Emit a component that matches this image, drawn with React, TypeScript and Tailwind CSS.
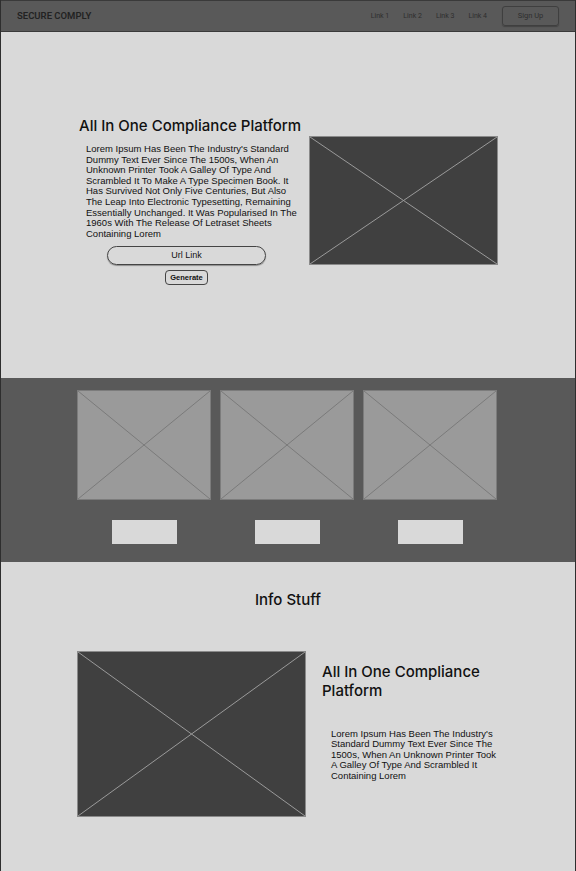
import React from 'react';

const body = { fontFamily: '"Liberation Sans", Arial, sans-serif' };
const head = { fontFamily: 'Inter, "Liberation Sans", sans-serif' };
const nav = { fontFamily: 'Roboto, "Liberation Sans", sans-serif' };

function Placeholder({ className, line }: { className: string; line: string }) {
  return (
    <div className={`relative ${className}`}>
      <svg
        className="absolute inset-0 h-full w-full"
        viewBox="0 0 100 100"
        preserveAspectRatio="none"
      >
        <line x1="0" y1="0" x2="100" y2="100" stroke={line} strokeWidth="1" vectorEffect="non-scaling-stroke" />
        <line x1="100" y1="0" x2="0" y2="100" stroke={line} strokeWidth="1" vectorEffect="non-scaling-stroke" />
      </svg>
    </div>
  );
}

const cards = [1, 2, 3];

export default function App() {
  return (
    <div className="min-h-[871px] w-[576px] border-x border-[#2e2e2e] bg-[#d9d9d9]">
      {/* Header */}
      <header
        className="flex h-8 items-center border-t border-b border-[#3a3a3a] bg-[#595959] pl-[16px] pr-[16px]"
        style={nav}
      >
        <span className="text-[9.5px] font-semibold text-[#222]">SECURE COMPLY</span>
        <nav className="ml-auto flex items-center gap-[14px] text-[7px] text-[#2e2e2e]">
          <span>Link 1</span>
          <span>Link 2</span>
          <span>Link 3</span>
          <span>Link 4</span>
        </nav>
        <button className="ml-[15px] h-[20px] w-[57px] rounded-[3px] border border-[#3f3f3f] text-[7.5px] text-[#2e2e2e] shadow-[0_1px_1px_rgba(0,0,0,0.25)]">
          Sign Up
        </button>
      </header>

      {/* Hero */}
      <section className="flex h-[346px] items-start pl-[78px] pt-[84px]">
        <div className="flex w-[230px] flex-col">
          <h1 className="whitespace-nowrap text-[15px] leading-5 font-medium text-[#111]" style={head}>
            All In One Compliance Platform
          </h1>
          <p className="mt-[8px] ml-[7px] w-[214px] text-[9.5px] leading-[10.6px] text-[#111]" style={body}>
            Lorem Ipsum Has Been The Industry's Standard Dummy Text Ever Since The 1500s, When An
            Unknown Printer Took A Galley Of Type And Scrambled It To Make A Type Specimen Book. It
            Has Survived Not Only Five Centuries, But Also The Leap Into Electronic Typesetting,
            Remaining Essentially Unchanged. It Was Popularised In The 1960s With The Release Of
            Letraset Sheets Containing Lorem
          </p>
          <div className="ml-[28px] mt-[7px] flex w-[159px] flex-col items-center" style={body}>
            <button className="h-[19px] w-[159px] rounded-full border border-[#444] text-[9px] text-[#111] shadow-[0_1px_1px_rgba(0,0,0,0.35)]">
              Url Link
            </button>
            <button className="mt-[5px] h-[15px] w-[43px] rounded-[4px] border border-[#444] text-[7.5px] font-bold text-[#111]">
              Generate
            </button>
          </div>
        </div>
        <Placeholder
          className="mt-[20px] h-[129px] w-[189px] border border-[#8a8a8a] bg-[#404040]"
          line="#9a9a9a"
        />
      </section>

      {/* Cards band */}
      <section className="flex h-[184px] gap-[9px] bg-[#595959] pl-[76px] pt-[12px]">
        {cards.map((c) => (
          <div key={c} className="flex w-[134px] flex-col items-center">
            <Placeholder
              className="h-[110px] w-[134px] border border-[#7c7c7c] bg-[#9a9a9a]"
              line="#7a7a7a"
            />
            <div className="mt-[20px] h-[24px] w-[65px] bg-[#d9d9d9]" />
          </div>
        ))}
      </section>

      {/* Info */}
      <section className="flex flex-col pb-[54px]">
        <h2 className="mt-[28px] text-center text-[15px] leading-5 font-medium text-[#111]" style={head}>
          Info Stuff
        </h2>
        <div className="mt-[41px] flex items-start pl-[76px]">
          <Placeholder
            className="h-[166px] w-[229px] border border-[#8a8a8a] bg-[#404040]"
            line="#9a9a9a"
          />
          <div className="ml-[16px] mt-[11px] flex flex-col">
            <h3 className="w-[170px] text-[15px] leading-[19px] font-medium text-[#111]" style={head}>
              All In One Compliance Platform
            </h3>
            <p className="ml-[9px] mt-[29px] w-[172px] text-[9.5px] leading-[10.4px] text-[#111]" style={body}>
              Lorem Ipsum Has Been The Industry's Standard Dummy Text Ever Since The 1500s, When An
              Unknown Printer Took A Galley Of Type And Scrambled It Containing Lorem
            </p>
          </div>
        </div>
      </section>
    </div>
  );
}
